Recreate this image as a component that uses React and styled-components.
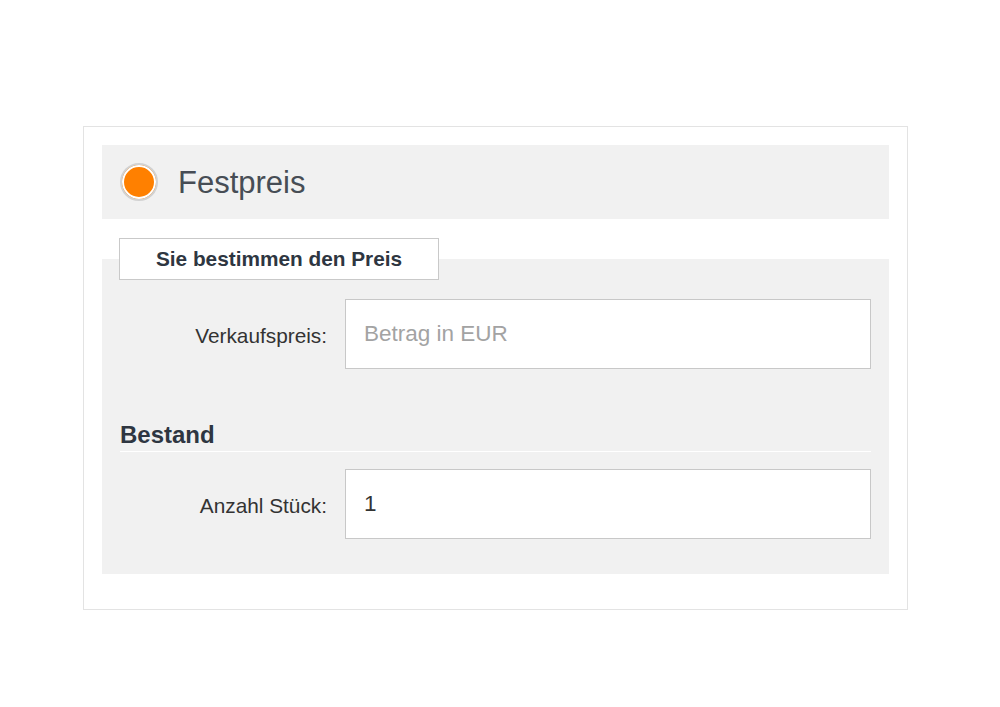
import React, { useState } from 'react'
import styled, { createGlobalStyle } from 'styled-components'

const GlobalStyle = createGlobalStyle`
  html, body {
    margin: 0;
    padding: 0;
    background: #ffffff;
    font-family: "Liberation Sans", Arial, sans-serif;
  }
`

const Page = styled.div`
  padding: 126px 0 0 83px;
`

const Card = styled.div`
  box-sizing: border-box;
  width: 825px;
  border: 1px solid #e3e3e3;
  background: #fff;
  padding: 18px 18px 35px 18px;
`

const OptionHeader = styled.label`
  display: flex;
  align-items: center;
  gap: 20px;
  height: 74px;
  padding-left: 18px;
  background: #f1f1f1;
  cursor: pointer;
`

const RadioDot = styled.span`
  box-sizing: border-box;
  width: 38px;
  height: 38px;
  border-radius: 50%;
  border: 2px solid #d2d2d2;
  background: ${p => (p.$checked ? '#ff8000' : '#fff')};
  box-shadow: inset 0 0 0 2px #fff;
`

const OptionTitle = styled.span`
  font-size: 31px;
  color: #474d55;
  line-height: 1;
`

const Tab = styled.div`
  position: relative;
  z-index: 1;
  box-sizing: border-box;
  width: 320px;
  height: 42px;
  margin: 19px 0 -21px 17px;
  border: 1px solid #c9c9c9;
  background: #fff;
  display: flex;
  align-items: center;
  justify-content: center;
  font-size: 20.8px;
  font-weight: bold;
  color: #2e3641;
`

const Panel = styled.div`
  background: #f1f1f1;
  padding: 40px 18px 35px 18px;
`

const FieldRow = styled.div`
  display: grid;
  grid-template-columns: 207px 1fr;
  column-gap: 18px;
  align-items: center;
`

const FieldLabel = styled.label`
  text-align: right;
  font-size: 20.8px;
  color: #333;
  padding-top: 3px;
`

const TextInput = styled.input`
  box-sizing: border-box;
  width: 100%;
  height: 70px;
  border: 1px solid #c8c8c8;
  background: #fff;
  padding: 0 18px;
  font-family: "Liberation Sans", Arial, sans-serif;
  font-size: 22.5px;
  color: #333;
  outline: none;

  &::placeholder {
    color: #a3a3a3;
  }
`

const SectionTitle = styled.h3`
  margin: 52px 0 17px 0;
  padding-bottom: 2px;
  line-height: 28px;
  font-size: 24px;
  font-weight: bold;
  color: #2e3641;
  border-bottom: 1px solid #ffffff;
`

const App = () => {
  const [price, setPrice] = useState('')
  const [count, setCount] = useState('1')

  return (
    <Page>
      <GlobalStyle />
      <Card>
        <OptionHeader>
          <RadioDot $checked />
          <OptionTitle>Festpreis</OptionTitle>
        </OptionHeader>

        <Tab>Sie bestimmen den Preis</Tab>
        <Panel>
          <FieldRow>
            <FieldLabel htmlFor="price">Verkaufspreis:</FieldLabel>
            <TextInput
              id="price"
              placeholder="Betrag in EUR"
              value={price}
              onChange={e => setPrice(e.target.value)}
            />
          </FieldRow>

          <SectionTitle>Bestand</SectionTitle>

          <FieldRow>
            <FieldLabel htmlFor="count">Anzahl Stück:</FieldLabel>
            <TextInput
              id="count"
              value={count}
              onChange={e => setCount(e.target.value)}
            />
          </FieldRow>
        </Panel>
      </Card>
    </Page>
  )
}

export default App
